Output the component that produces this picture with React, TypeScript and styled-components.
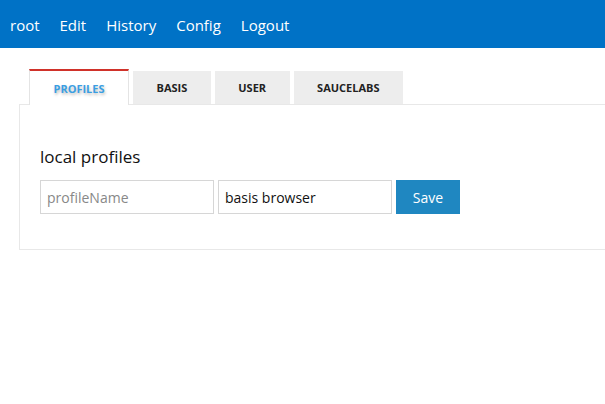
import React from "react";
import styled, { createGlobalStyle } from "styled-components";

const Global = createGlobalStyle`
  html, body { margin: 0; padding: 0; background: #fff; }
  body { font-family: "Segoe UI", "Open Sans", "Noto Sans", sans-serif; }
  * { box-sizing: border-box; }
`;

const TopBar = styled.nav`
  height: 48px;
  background: #0072c6;
  display: flex;
  align-items: center;
  padding-top: 2px;
`;

const NavLink = styled.a`
  color: #fff;
  font-size: 15px;
  padding: 0 10px;
  text-decoration: none;
  line-height: 20px;
`;

const Main = styled.div`
  padding: 21px 0 0 19px;
`;

const TabStrip = styled.div`
  display: flex;
  gap: 4px;
  padding-left: 10px;
  border-bottom: 1px solid #e8e8e8;
  align-items: flex-end;
`;

const Tab = styled.div<{ $active?: boolean }>`
  height: ${(p) => (p.$active ? "36px" : "33px")};
  padding: 0 23.5px;
  display: flex;
  align-items: center;
  justify-content: center;
  font-size: 11px;
  font-weight: 700;
  text-transform: uppercase;
  color: ${(p) => (p.$active ? "#3a9ee2" : "#222")};
  background: ${(p) => (p.$active ? "#fff" : "#ededed")};
  border: ${(p) => (p.$active ? "1px solid #e4e4e4" : "none")};
  border-top: ${(p) => (p.$active ? "2px solid #d0322a" : "none")};
  border-bottom: none;
  margin-bottom: ${(p) => (p.$active ? "-1px" : "0")};
  text-shadow: ${(p) => (p.$active ? "1px 2px 3px rgba(0,0,0,0.25)" : "none")};
`;

const Panel = styled.div`
  border-left: 1px solid #e8e8e8;
  border-bottom: 1px solid #e8e8e8;
  padding: 41px 20px 35px 20px;
`;

const Heading = styled.h3`
  margin: 0 0 12px 0;
  font-size: 17px;
  font-weight: 400;
  color: #111;
  line-height: 22px;
`;

const Row = styled.div`
  display: flex;
  gap: 4px;
`;

const Field = styled.input`
  width: 174px;
  height: 34px;
  border: 1px solid #d6d6d6;
  padding: 0 6px;
  font-family: inherit;
  font-size: 14px;
  color: #111;
  outline: none;
  &::placeholder { color: #888; }
`;

const SaveButton = styled.button`
  width: 64px;
  height: 34px;
  border: none;
  background: #1f87c1;
  color: #fff;
  font-family: inherit;
  font-size: 14px;
`;

export default function App() {
  return (
    <>
      <Global />
      <TopBar>
        <NavLink>root</NavLink>
        <NavLink>Edit</NavLink>
        <NavLink>History</NavLink>
        <NavLink>Config</NavLink>
        <NavLink>Logout</NavLink>
      </TopBar>
      <Main>
        <TabStrip>
          <Tab $active>Profiles</Tab>
          <Tab>Basis</Tab>
          <Tab>User</Tab>
          <Tab>Saucelabs</Tab>
        </TabStrip>
        <Panel>
          <Heading>local profiles</Heading>
          <Row>
            <Field placeholder="profileName" />
            <Field defaultValue="basis browser" />
            <SaveButton>Save</SaveButton>
          </Row>
        </Panel>
      </Main>
    </>
  );
}
